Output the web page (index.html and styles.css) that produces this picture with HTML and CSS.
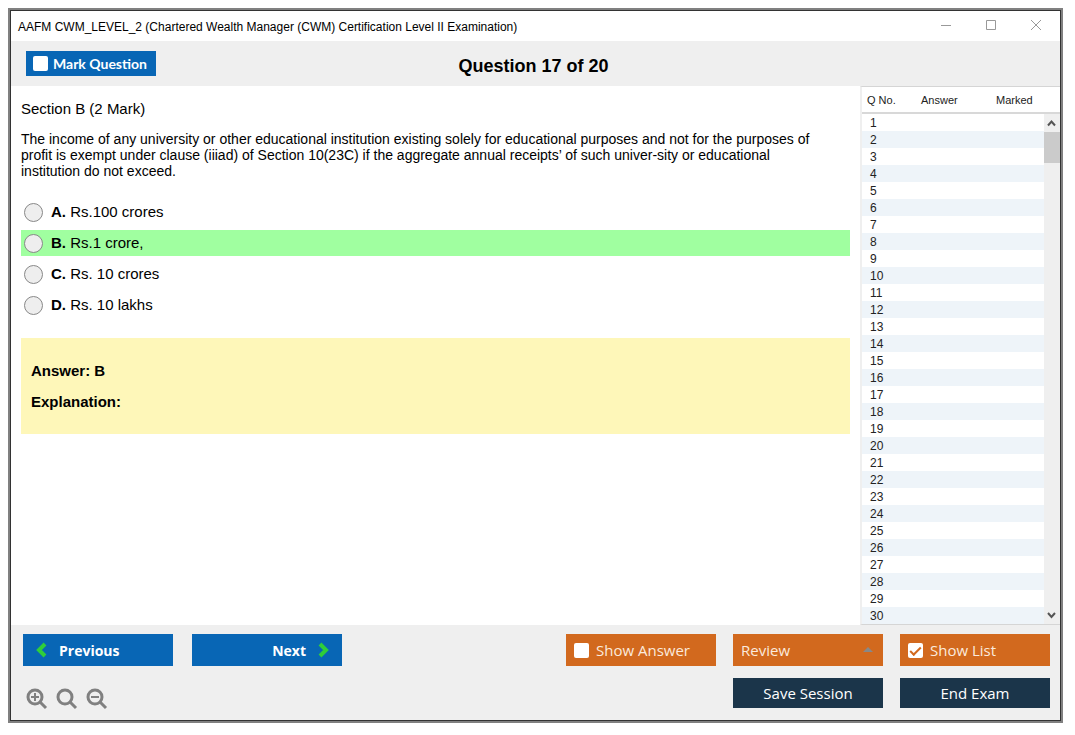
FILE: index.html
```html
<!DOCTYPE html>
<html lang="en">
<head>
    <meta charset="UTF-8">
    <meta name="viewport" content="width=device-width, initial-scale=1.0">
    <title>AAFM CWM_LEVEL_2</title>
    <link rel="stylesheet" href="styles.css">
</head>
<body>
    <div class="window">
        <div class="titlebar">
            <span class="title">AAFM CWM_LEVEL_2 (Chartered Wealth Manager (CWM) Certification Level II Examination)</span>
            <div class="window-buttons">
                <button type="button" aria-label="Minimize">
                    <svg width="12" height="12" viewBox="0 0 12 12"><path d="M1 5.500h10"/></svg>
                </button>
                <button type="button" aria-label="Maximize">
                    <svg width="12" height="12" viewBox="0 0 12 12"><path d="M1.500 .5h9v9h-9z"/></svg>
                </button>
                <button type="button" aria-label="Close">
                    <svg width="12" height="12" viewBox="0 0 12 12"><path d="M1 0l10 10M11 0L1 10"/></svg>
                </button>
            </div>
        </div>

        <header class="header">
            <label class="mark"><input type="checkbox" class="check"> Mark Question</label>
            <h1>Question 17 of 20</h1>
        </header>

        <main class="main">
            <section class="question">
                <p class="section-name">Section B (2 Mark)</p>
                <p class="text">The income of any university or other educational institution existing solely for educational purposes and not for the purposes of<br>
                    profit is exempt under clause (iiiad) of Section 10(23C) if the aggregate annual receipts’ of such univer-sity or educational<br>
                    institution do not exceed.</p>
                <div class="options">
                    <label class="option"><input type="radio" name="answer" value="A"><span><b>A.</b> Rs.100 crores</span></label>
                    <label class="option correct"><input type="radio" name="answer" value="B"><span><b>B.</b> Rs.1 crore,</span></label>
                    <label class="option"><input type="radio" name="answer" value="C"><span><b>C.</b> Rs. 10 crores</span></label>
                    <label class="option"><input type="radio" name="answer" value="D"><span><b>D.</b> Rs. 10 lakhs</span></label>
                </div>
                <div class="answer">
                    <p>Answer: B</p>
                    <p>Explanation:</p>
                </div>
            </section>

            <aside class="list">
                <div class="list-rows">
                    <table>
                        <thead>
                            <tr>
                                <th class="col-number">Q No.</th>
                                <th class="col-answer">Answer</th>
                                <th>Marked</th>
                            </tr>
                        </thead>
                        <tbody id="question-list">
                            <!-- rows are added by the script -->
                        </tbody>
                    </table>
                </div>
                <div class="scrollbar">
                    <svg width="15" height="18" viewBox="0 0 15 18"><path d="M4 11.500l3.500-4 3.500 4"/></svg>
                    <div class="thumb"></div>
                    <svg class="down" width="15" height="18" viewBox="0 0 15 18"><path d="M4 7l3.500 4L11 7"/></svg>
                </div>
            </aside>
        </main>

        <footer class="footer">
            <div class="row">
                <div class="group group-nav">
                    <button type="button" class="btn nav">
                        <svg width="11" height="16" viewBox="0 0 11 16"><path d="M9 2L3 8l6 6"/></svg>
                        Previous
                    </button>
                    <button type="button" class="btn nav next">
                        Next
                        <svg width="11" height="16" viewBox="0 0 11 16"><path d="M2 2l6 6-6 6"/></svg>
                    </button>
                </div>
                <div class="group">
                    <label class="btn orange"><input type="checkbox" class="check"> Show Answer</label>
                    <div class="review">
                        <select class="btn orange" aria-label="Review">
                            <option>Review</option>
                        </select>
                        <span class="arrow"></span>
                    </div>
                    <label class="btn orange"><input type="checkbox" class="check" checked> Show List</label>
                </div>
            </div>
            <div class="row">
                <div class="zoom">
                    <button type="button" aria-label="Zoom in">
                        <svg width="22" height="22" viewBox="0 0 22 22"><circle cx="9" cy="9" r="7"/><path d="M14 14l6 6"/><path class="thin" d="M5 9h8M9 5v8"/></svg>
                    </button>
                    <button type="button" aria-label="Reset zoom">
                        <svg width="22" height="22" viewBox="0 0 22 22"><circle cx="9" cy="9" r="7"/><path d="M14 14l6 6"/></svg>
                    </button>
                    <button type="button" aria-label="Zoom out">
                        <svg width="22" height="22" viewBox="0 0 22 22"><circle cx="9" cy="9" r="7"/><path d="M14 14l6 6"/><path class="thin" d="M5 9h8"/></svg>
                    </button>
                </div>
                <div class="group">
                    <button type="button" class="btn dark">Save Session</button>
                    <button type="button" class="btn dark">End Exam</button>
                </div>
            </div>
        </footer>
    </div>
    <script>
        const list = document.getElementById("question-list");

        for (let i = 1; i <= 30; i++) {
            const row = document.createElement("tr");
            row.innerHTML = `<td>${i}</td><td></td><td></td>`;
            list.appendChild(row);
        }
    </script>
</body>
</html>
```
FILE: styles.css
```css
* {
    box-sizing: border-box;
}

body {
    margin: 0;
    padding: 8px 12px 12px 8px;
    height: 100vh;
    background-color: #fff;
    color: #000;
    font-family: "Liberation Sans", Arial, sans-serif;
    font-size: 15px;
    line-height: 16px;
}

p, h1 {
    margin: 0;
}

button {
    border: none;
    padding: 0;
    background: none;
    cursor: pointer;
}

svg {
    display: block;
    fill: none;
}

.window {
    display: flex;
    flex-direction: column;
    height: 100%;
    border: 2px solid #808080;
    outline: 1px solid #333;
    outline-offset: -3px;
    padding: 1px;
}

/* Title bar */
.titlebar {
    display: flex;
    justify-content: space-between;
    align-items: center;
    height: 30px;
    padding: 0 18px 0 7px;
    font-size: 12px;
}

.title {
    padding-top: 2px;
}

.window-buttons {
    display: flex;
    gap: 33px;
}

.window-buttons svg {
    stroke: #999;
}

/* Question number bar */
.header {
    display: grid;
    grid-template-columns: 1fr auto 1fr;
    align-items: center;
    height: 45px;
    padding: 0 19px 0 15px;
    background-color: #efefef;
}

.header h1 {
    padding-top: 4px;
    font-size: 18px;
    line-height: 20px;
}

.mark {
    display: flex;
    align-items: center;
    gap: 5px;
    justify-self: start;
    width: 130px;
    height: 25px;
    padding-left: 7px;
    background-color: #0866b5;
    color: #fff;
    font-family: Lato, sans-serif;
    font-size: 14px;
    font-weight: bold;
}

.check {
    appearance: none;
    flex: none;
    width: 15px;
    height: 15px;
    margin: 0;
    border-radius: 2px;
    background-color: #fff;
}

.check:checked::before {
    content: "";
    display: block;
    box-sizing: border-box;
    width: 11px;
    height: 6px;
    margin: 4px 0 0 2px;
    border-left: 2px solid #d2691e;
    border-bottom: 2px solid #d2691e;
    transform: rotate(-45deg);
}

.main {
    display: flex;
    flex: 1;
    min-height: 0;
}

/* Question */
.question {
    flex: 1;
    padding: 15px 10px 0;
}

.section-name {
    margin-bottom: 14px;
}

.text {
    font-size: 14px;
}

.options {
    display: flex;
    flex-direction: column;
    gap: 5px;
    margin: 20px 0;
}

.option {
    display: flex;
    align-items: center;
    gap: 8px;
    height: 26px;
    padding-left: 3px;
}

.option input {
    appearance: none;
    width: 19px;
    height: 19px;
    margin: 0;
    border: 1px solid #888;
    border-radius: 50%;
    background-color: #eee;
}

.option input:checked {
    border-width: 6px;
}

.correct {
    background-color: #a0ffa0;
}

.answer {
    display: flex;
    flex-direction: column;
    gap: 15px;
    padding: 25px 10px 24px;
    background-color: #fef7b9;
    font-weight: bold;
}

/* Question list */
.list {
    display: flex;
    width: 200px;
    border-left: 2px solid #efefef;
    border-top: 1px solid #d5d5d5;
    border-bottom: 1px solid #d5d5d5;
    color: #222;
    font-size: 12px;
}

.list-rows {
    flex: 1;
    overflow: hidden;
}

.list table {
    width: 198px;
    table-layout: fixed;
    border-collapse: separate;
    border-spacing: 0;
}

.list th {
    height: 27px;
    padding: 0 0 0 5px;
    border-bottom: 2px solid #d8d8d8;
    font-size: 11px;
    font-weight: normal;
    text-align: left;
}

.col-number {
    width: 54px;
}

.col-answer {
    width: 75px;
}

.list td {
    height: 17px;
    padding: 1px 0 0 8px;
}

.list tbody tr:nth-child(even) {
    background-color: #eef4f9;
}

.scrollbar {
    display: flex;
    flex-direction: column;
    width: 16px;
    margin-top: 25px;
    border-top: 2px solid #d8d8d8;
    background-color: #efefef;
}

.scrollbar svg {
    stroke: #555;
    stroke-width: 2;
}

.thumb {
    height: 31px;
    background-color: #cbcbcb;
}

.down {
    margin-top: auto;
}

/* Bottom bar */
.footer {
    display: flex;
    flex-direction: column;
    gap: 12px;
    padding: 9px 10px 10px 12px;
    background-color: #efefef;
}

.row {
    display: flex;
    justify-content: space-between;
    align-items: flex-start;
}

.group {
    display: flex;
    gap: 17px;
}

.group-nav {
    gap: 19px;
}

.btn {
    display: flex;
    align-items: center;
    width: 150px;
    height: 32px;
    color: #fff;
    font-family: "Open Sans", sans-serif;
    font-size: 15px;
}

.nav {
    gap: 12px;
    padding: 0 13px;
    background-color: #0866b5;
    font-size: 14px;
    font-weight: bold;
}

.nav svg {
    stroke: #2fce3a;
    stroke-width: 4;
}

.next {
    justify-content: flex-end;
}

.orange {
    gap: 7px;
    padding: 0 8px;
    border: none;
    border-radius: 0;
    background-color: #d2691e;
    color: #fbeadd;
}

select.orange {
    appearance: none;
}

.review {
    position: relative;
}

.arrow {
    position: absolute;
    top: 13px;
    right: 10px;
    border: 5px solid transparent;
    border-top: none;
    border-bottom-color: #888;
    pointer-events: none;
}

.dark {
    justify-content: center;
    height: 30px;
    background-color: #1b354a;
}

.zoom {
    display: flex;
    gap: 8px;
    padding: 10px 0 0 3px;
}

.zoom svg {
    stroke: #808080;
    stroke-width: 3;
}

.zoom .thin {
    stroke-width: 2;
}
```
